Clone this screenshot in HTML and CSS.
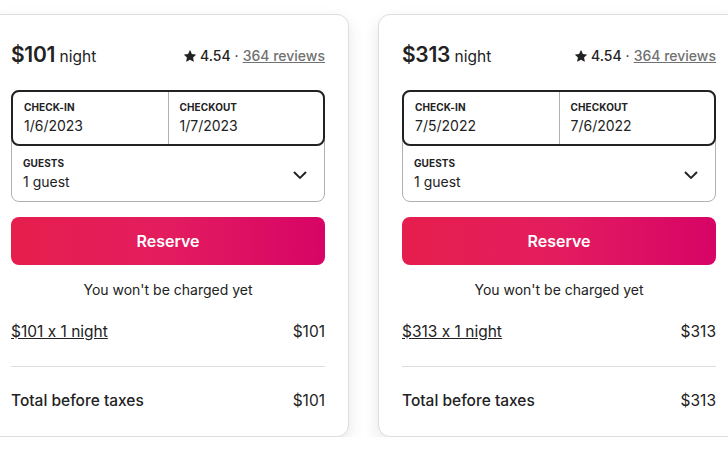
FILE: index.html
```html
<!DOCTYPE html>
<html>
<head>
<meta charset="utf-8">
<link rel="stylesheet" href="styles.css">
</head>
<body>
<div class="row">
  <div class="card">
    <div class="head">
      <div class="price"><span class="amt">$101</span> <span class="per">night</span></div>
      <div class="rating">
        <svg class="star" viewBox="0 0 32 32" width="12" height="12"><path d="M15.1 1.58l-4.13 8.88-9.86 1.27a1 1 0 0 0-.54 1.74l7.3 6.57-1.97 9.85a1 1 0 0 0 1.48 1.06l8.62-5 8.63 5a1 1 0 0 0 1.48-1.06l-1.97-9.85 7.3-6.57a1 1 0 0 0-.55-1.73l-9.86-1.28-4.12-8.88a1 1 0 0 0-1.82 0z" fill="#222"/></svg>
        <span class="score">4.54</span><span class="dot">·</span><span class="reviews">364 reviews</span>
      </div>
    </div>
    <div class="picker">
      <div class="dates">
        <div class="field"><div class="lbl">CHECK-IN</div><div class="val">1/6/2023</div></div>
        <div class="field second"><div class="lbl">CHECKOUT</div><div class="val">1/7/2023</div></div>
      </div>
      <div class="guests">
        <div class="field"><div class="lbl">GUESTS</div><div class="val">1 guest</div></div>
        <svg class="chev" viewBox="0 0 32 32" width="16" height="16"><path d="M28 12L16.7 23.3a1 1 0 0 1-1.4 0L4 12" fill="none" stroke="#222" stroke-width="4"/></svg>
      </div>
    </div>
    <button class="reserve">Reserve</button>
    <p class="note">You won't be charged yet</p>
    <div class="line"><span class="u">$101 x 1 night</span><span>$101</span></div>
    <div class="total"><span class="tl">Total before taxes</span><span>$101</span></div>
  </div>
  <div class="card">
    <div class="head">
      <div class="price"><span class="amt">$313</span> <span class="per">night</span></div>
      <div class="rating">
        <svg class="star" viewBox="0 0 32 32" width="12" height="12"><path d="M15.1 1.58l-4.13 8.88-9.86 1.27a1 1 0 0 0-.54 1.74l7.3 6.57-1.97 9.85a1 1 0 0 0 1.48 1.06l8.62-5 8.63 5a1 1 0 0 0 1.48-1.06l-1.97-9.85 7.3-6.57a1 1 0 0 0-.55-1.73l-9.86-1.28-4.12-8.88a1 1 0 0 0-1.82 0z" fill="#222"/></svg>
        <span class="score">4.54</span><span class="dot">·</span><span class="reviews">364 reviews</span>
      </div>
    </div>
    <div class="picker">
      <div class="dates">
        <div class="field"><div class="lbl">CHECK-IN</div><div class="val">7/5/2022</div></div>
        <div class="field second"><div class="lbl">CHECKOUT</div><div class="val">7/6/2022</div></div>
      </div>
      <div class="guests">
        <div class="field"><div class="lbl">GUESTS</div><div class="val">1 guest</div></div>
        <svg class="chev" viewBox="0 0 32 32" width="16" height="16"><path d="M28 12L16.7 23.3a1 1 0 0 1-1.4 0L4 12" fill="none" stroke="#222" stroke-width="4"/></svg>
      </div>
    </div>
    <button class="reserve">Reserve</button>
    <p class="note">You won't be charged yet</p>
    <div class="line"><span class="u">$313 x 1 night</span><span>$313</span></div>
    <div class="total"><span class="tl">Total before taxes</span><span>$313</span></div>
  </div>
</div>
</body>
</html>
```
FILE: styles.css
```css
* { box-sizing: border-box; }
html, body { margin: 0; background: #fff; overflow: hidden; }
body {
  font-family: Inter, "Noto Sans", sans-serif;
  color: #222;
  font-feature-settings: "calt" 0;
}
.row {
  display: flex;
  gap: 29px;
  margin-left: -13px;
  padding-top: 14px;
}
.card {
  flex: 0 0 362px;
  width: 362px;
  border: 1px solid #dddddd;
  border-radius: 12px;
  padding: 23px 23px 25px;
  box-shadow: 0 6px 16px rgba(0,0,0,0.10);
  background: #fff;
}
.head {
  display: flex;
  justify-content: space-between;
  align-items: center;
  height: 32px;
  margin-bottom: 20px;
}
.price { white-space: nowrap; }
.amt { font-size: 21px; font-weight: 600; letter-spacing: -0.3px; }
.per { font-size: 15.5px; font-weight: 400; }
.rating { display: flex; align-items: center; font-size: 14px; margin-top: 3px; }
.star { margin-right: 4px; }
.score { font-weight: 500; }
.dot { margin: 0 4px; color: #222; }
.reviews { color: #717171; text-decoration: underline; font-weight: 500; }
.picker {
  border-radius: 8px;
  border: 1px solid #b0b0b0;
}
.dates {
  display: flex;
  height: 56px;
  margin: -1px -1px 0 -1px;
  border: 2px solid #222;
  border-radius: 8px;
}
.dates .field { flex: 1; padding: 9px 0 0 11px; }
.dates .second { border-left: 1px solid #b0b0b0; }
.guests {
  display: flex;
  align-items: center;
  justify-content: space-between;
  height: 55px;
  padding: 0 16px 0 11px;
}
.lbl { font-size: 10px; font-weight: 700; letter-spacing: 0.1px; line-height: 12px; }
.val { font-size: 14px; line-height: 18px; margin-top: 4px; color: #222; font-weight: 400; }
.chev { display: block; }
.reserve {
  display: block;
  width: 100%;
  height: 48px;
  margin-top: 15px;
  border: none;
  border-radius: 8px;
  background: linear-gradient(to right, #e61e4d 0%, #e31c5f 50%, #d70466 100%);
  color: #fff;
  font-family: inherit;
  font-size: 16px;
  font-weight: 600;
}
.note {
  margin: 16px 0 0;
  text-align: center;
  font-size: 14px;
  line-height: 18px;
  color: #222;
}
.line {
  display: flex;
  justify-content: space-between;
  font-size: 15.5px;
  line-height: 20px;
  margin-top: 23px;
  padding-bottom: 24px;
  border-bottom: 1px solid #dddddd;
}
.u { text-decoration: underline; }
.total {
  display: flex;
  justify-content: space-between;
  font-size: 15.5px;
  font-weight: 400;
  line-height: 20px;
  padding-top: 24px;
}
.tl { font-weight: 500; }
```
